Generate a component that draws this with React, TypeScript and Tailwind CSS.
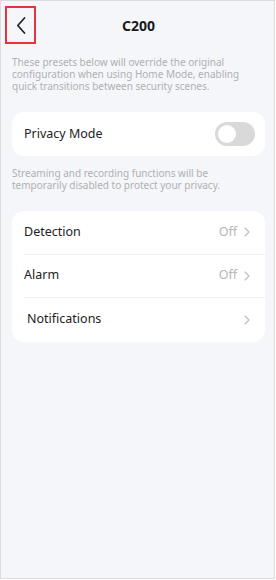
export default function App() {
  const rows = [
    { label: "Detection", value: "Off", indent: false },
    { label: "Alarm", value: "Off", indent: false },
    { label: "Notifications", value: "", indent: true },
  ]

  return (
    <div className="w-[276px] h-[580px] bg-white" style={{ fontFamily: '"Noto Sans", Roboto, sans-serif' }}>
      <div className="w-[275px] h-[579px] bg-[#f5f6fa] border border-[#dcdcdc] flex flex-col">
        {/* header */}
        <header className="relative h-[48px] flex items-center justify-center">
          <div className="absolute left-[4px] top-[5px] w-[31px] h-[38px] border-[2.5px] border-[#e8333a] flex items-center justify-center">
            <svg width="10" height="17" viewBox="0 0 10 17" fill="none">
              <path d="M8.5 1 L1.8 8.5 L8.5 16" stroke="#222" strokeWidth="1.7" strokeLinecap="round" strokeLinejoin="round" />
            </svg>
          </div>
          <h1 className="text-[14px] font-bold text-[#1a1a1a] ml-[2px]">C200</h1>
        </header>

        <p className="px-[11px] mt-[7px] text-[10px] leading-[12px] text-[#b0b0b0]">
          These presets below will override the original configuration when using Home Mode, enabling quick transitions between security scenes.
        </p>

        <div className="ml-[11px] mr-[9px] mt-[20px] h-[44px] bg-white rounded-[12px] flex items-center justify-between pl-[12px] pr-[10px]">
          <span className="text-[12.5px] text-[#222]">Privacy Mode</span>
          <div className="w-[40px] h-[24px] rounded-full bg-[#d9d9d9] p-[3px] flex items-center">
            <div className="w-[18px] h-[18px] rounded-full bg-white" />
          </div>
        </div>

        <p className="px-[11px] mt-[11px] text-[10px] leading-[12px] text-[#b0b0b0]">
          Streaming and recording functions will be temporarily disabled to protect your privacy.
        </p>

        <div className="ml-[11px] mr-[9px] mt-[20px] bg-white rounded-[12px] flex flex-col">
          {rows.map((r, i) => (
            <div key={r.label} className={`h-[43.5px] flex items-center justify-between ml-[12px] pr-[15px] ${i < rows.length - 1 ? "border-b border-[#f0f0f2]" : ""}`}>
              <span className={`text-[12.5px] text-[#222] ${r.indent ? "pl-[3px]" : ""}`}>{r.label}</span>
              <div className="flex items-center gap-[7px]">
                {r.value && <span className="text-[12.5px] text-[#b8b8b8]">{r.value}</span>}
                <svg width="6" height="10" viewBox="0 0 6 10" fill="none">
                  <path d="M1 1 L5 5 L1 9" stroke="#bdbdbd" strokeWidth="1.1" strokeLinecap="round" strokeLinejoin="round" />
                </svg>
              </div>
            </div>
          ))}
        </div>
      </div>
    </div>
  )
}
